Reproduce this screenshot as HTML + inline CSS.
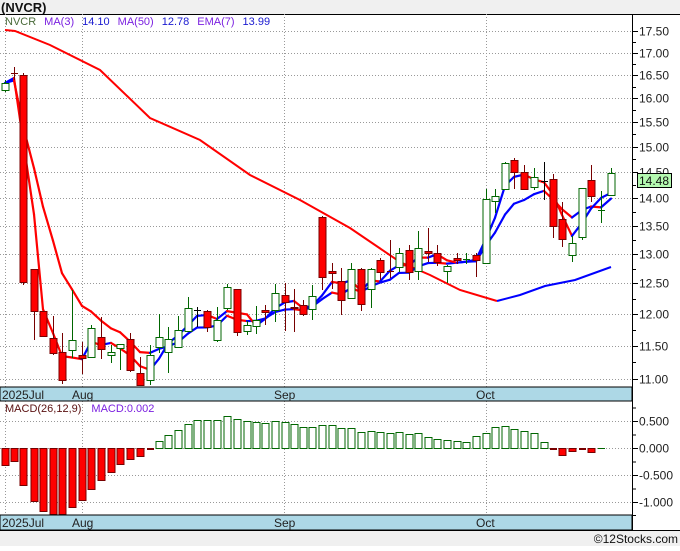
<!DOCTYPE html>
<html><head><meta charset="utf-8"><style>
html,body{margin:0;padding:0;background:#fff;}
body{width:680px;height:546px;overflow:hidden;font-family:"Liberation Sans",sans-serif;}
svg text{font-family:"Liberation Sans",sans-serif;}
</style></head><body>
<svg id="s" width="680" height="546" xmlns="http://www.w3.org/2000/svg">
<rect x="0" y="0" width="680" height="546" fill="#fff"/>
<rect x="0" y="0" width="680" height="14" fill="#f0f0f0"/>
<text x="1" y="12" font-size="13" font-weight="bold" fill="#111">(NVCR)</text>
<rect x="0" y="530" width="680" height="16" fill="#f0f0f0"/>
<text x="678" y="543" font-size="12" fill="#111" text-anchor="end">©12Stocks.com</text>
<g id="g"></g>
</svg>
<script>
var NS="http://www.w3.org/2000/svg",g=document.getElementById('g');
function el(t,a,txt){var e=document.createElementNS(NS,t);for(var k in a)e.setAttribute(k,a[k]);if(txt!=null)e.textContent=txt;g.appendChild(e);return e;}
function Y(p){return 31+750*(Math.log(17.5)-Math.log(p));}
function P(y){return Math.exp(Math.log(17.5)-(y-31)/750);}
// frame
el('line',{x1:0,y1:14.5,x2:680,y2:14.5,stroke:'#000'});
el('line',{x1:632.5,y1:14,x2:632.5,y2:530,stroke:'#000'});
// grid main
var labs=[17.5,17,16.5,16,15.5,15,14.5,14,13.5,13,12.5,12,11.5,11];
labs.forEach(function(p){var y=Math.round(Y(p))+0.5;
 el('line',{x1:0,y1:y,x2:632,y2:y,stroke:'#999','stroke-dasharray':'1,2'});
 el('line',{x1:632,y1:y,x2:638,y2:y,stroke:'#000'});
 el('text',{x:639,y:y+4,'font-size':'12',fill:'#222'},p.toFixed(2));
 var y2=Math.round(Y(p-0.25))+0.5; if(p>11) el('line',{x1:632,y1:y2,x2:636,y2:y2,stroke:'#000'});
});
[5,82,284,486].forEach(function(x){el('line',{x1:x+.5,y1:14,x2:x+.5,y2:515,stroke:'#999','stroke-dasharray':'1,2'});});
// date bars
[[387,401],[515,530]].forEach(function(b){
 el('rect',{x:0,y:b[0],width:632,height:b[1]-b[0],fill:'#add8e6',stroke:'#000'});
 el('text',{x:2,y:b[0]+12,'font-size':'12',fill:'#222'},'2025Jul');
 el('text',{x:72,y:b[0]+12,'font-size':'12',fill:'#222'},'Aug');
 el('text',{x:274,y:b[0]+12,'font-size':'12',fill:'#222'},'Sep');
 el('text',{x:476,y:b[0]+12,'font-size':'12',fill:'#222'},'Oct');
});
// legend
var lg=el('text',{x:5,y:25,'font-size':'11'});
lg.innerHTML='<tspan fill="#4a6b3a">NVCR</tspan><tspan fill="#7a1fe0" dx="8">MA(3)</tspan><tspan fill="#1a1ad0" dx="8">14.10</tspan><tspan fill="#7a1fe0" dx="8">MA(50)</tspan><tspan fill="#1a1ad0" dx="8">12.78</tspan><tspan fill="#7a1fe0" dx="8">EMA(7)</tspan><tspan fill="#1a1ad0" dx="8">13.99</tspan>';
// MA50
el('polyline',{points:'5,30 15,31 50,45 100,70 150,118 200,140 250,175 300,200 350,228 400,262 430,275 460,290 497,301',fill:'none',stroke:'#f00','stroke-width':2});
el('polyline',{points:'497,301 520,295 545,286 575,280 611,267',fill:'none',stroke:'#00f','stroke-width':2});
// candles [x,top,bot,high,low,color]
var C=[[5,83,90,80,92,'g'],[14,73,73,67,80,'d'],[23,75,282,73,285,'r'],[34,269,311,269,340,'r'],[43,311,336,311,337,'r'],[53,338,353,316,355,'r'],[62,352,380,333,384,'r'],[72,340,350,290,358,'g'],[82,355,358,342,374,'r'],[91,328,357,325,358,'g'],[101,337,349,317,359,'r'],[111,352,355,345,363,'g'],[120,344,348,344,370,'g'],[130,339,370,333,372,'r'],[140,373,385,357,386,'r'],[150,355,380,345,385,'g'],[159,337,347,314,353,'g'],[168,339,352,327,373,'g'],[178,330,347,316,347,'g'],[188,308,331,297,331,'g'],[197,310,310,307,327,'k'],[207,311,327,310,332,'r'],[217,320,340,307,342,'g'],[227,287,308,284,310,'g'],[237,289,332,289,336,'r'],[247,325,331,321,335,'g'],[256,320,326,306,334,'g'],[265,310,312,305,325,'r'],[275,293,310,284,322,'g'],[285,295,302,283,331,'r'],[294,307,308,289,332,'r'],[303,305,314,300,316,'r'],[312,296,309,285,320,'g'],[322,217,277,216,290,'r'],[332,271,273,263,289,'r'],[341,281,300,268,315,'r'],[351,269,298,263,298,'g'],[361,269,304,268,311,'r'],[371,269,289,268,308,'g'],[380,260,272,258,280,'r'],[390,271,271,240,278,'d'],[399,253,267,248,272,'g'],[409,250,272,245,280,'r'],[418,248,271,231,280,'g'],[428,251,253,228,262,'r'],[437,253,262,245,266,'r'],[447,266,271,265,283,'g'],[457,258,260,253,264,'r'],[466,259,259,253,264,'g'],[476,255,260,253,277,'r'],[486,199,263,189,263,'g'],[495,196,201,189,213,'g'],[505,163,189,162,189,'g'],[514,160,172,158,189,'r'],[524,172,189,165,189,'r'],[534,177,187,168,190,'g'],[544,181,181,162,200,'k'],[553,179,226,174,238,'r'],[562,219,239,202,247,'r'],[572,243,255,236,262,'g'],[582,188,237,188,240,'g'],[591,180,196,165,202,'r'],[601,210,210,191,223,'g'],[611,173,195,168,195,'g']];
var closes=C.map(function(c){return P(c[5]=='r'?c[2]:c[1]);});
// MA3 and EMA7
function seg(pts){for(var i=1;i<pts.length;i++){var up=pts[i][1]<pts[i-1][1];
 el('line',{x1:pts[i-1][0],y1:pts[i-1][1],x2:pts[i][0],y2:pts[i][1],stroke:up?'#00f':'#f00','stroke-width':2.2,'stroke-linecap':'round'});}}
var m3=[],e7=[],e=closes[0];
for(var i=0;i<C.length;i++){var a=closes.slice(Math.max(0,i-2),i+1);var m=a.reduce(function(s,v){return s+v;},0)/a.length;
 m3.push([C[i][0],Y(m)]);e=i==0?closes[0]:e+(closes[i]-e)*0.25;e7.push([C[i][0],Y(e)]);}
seg(e7);seg(m3);
C.forEach(function(c){var x=c[0],col=c[5];
 var wc=col=='g'?'#060':col=='r'?'#700':col=='d'?'#700':'#000';
 el('line',{x1:x+.5,y1:c[3],x2:x+.5,y2:c[4],stroke:wc});
 if(c[2]-c[1]<1){el('line',{x1:x-3,y1:c[1]+.5,x2:x+4,y2:c[1]+.5,stroke:wc});}
 else el('rect',{x:x-3,y:c[1]+.5,width:7,height:c[2]-c[1],fill:col=='r'?'#f00':'#fff',stroke:col=='r'?'#700':'#060'});
});
// price box
el('rect',{x:637.5,y:173.5,width:34,height:14,fill:'#b4f8b0',stroke:'#000'});
el('text',{x:639,y:185,'font-size':'12',fill:'#111'},'14.48');
// MACD panel
[0.5,0,-0.5,-1].forEach(function(v){var y=448-v*54+.5;
 el('line',{x1:0,y1:y,x2:632,y2:y,stroke:'#999','stroke-dasharray':'1,2'});
 el('line',{x1:632,y1:y,x2:638,y2:y,stroke:'#000'});
 el('text',{x:639,y:y+4,'font-size':'12',fill:'#222'},v.toFixed(3));
 el('line',{x1:632,y1:y-13.5,x2:636,y2:y-13.5,stroke:'#000'});});
el('line',{x1:632,y1:515.5,x2:636,y2:515.5,stroke:'#000'});
var lg2=el('text',{x:5,y:412,'font-size':'11'});
lg2.innerHTML='<tspan fill="#5a1010">MACD(26,12,9)</tspan><tspan fill="#7a1fe0" dx="10">MACD:0.002</tspan>';
var M=[465,461,485,501,511,515,515,507,500,489,480,472,464,459,456,450,441,435,430,424,420,420,420,416,419,421,422,423,421,422,424,427,427,425,425,428,428,432,431,432,433,432,434,433,437,439,440,441,442,436,433,427,426,429,431,433,442,450,455,451,450,452,448];
M.forEach(function(v,i){var x=C[i][0];
 if(v==448){el('line',{x1:x-3,y1:448.5,x2:x+4,y2:448.5,stroke:'#060'});return;}
 if(v==450){el('rect',{x:x-3,y:448,width:7,height:2,fill:'#700'});return;}
 if(v>448) el('rect',{x:x-3,y:448.5,width:7,height:Math.min(v,514)-448,fill:'#f00',stroke:'#700'});
 else el('rect',{x:x-3,y:v+.5,width:7,height:448-v,fill:'#fff',stroke:'#060'});
});
// redraw date bars on top of macd overflow
el('rect',{x:0,y:515,width:632,height:15,fill:'#add8e6',stroke:'#000'});
[['2025Jul',2],['Aug',72],['Sep',274],['Oct',476]].forEach(function(t){el('text',{x:t[1],y:527,'font-size':'12',fill:'#222'},t[0]);});
el('line',{x1:0,y1:530.5,x2:680,y2:530.5,stroke:'#000'});
</script>
</body></html>
